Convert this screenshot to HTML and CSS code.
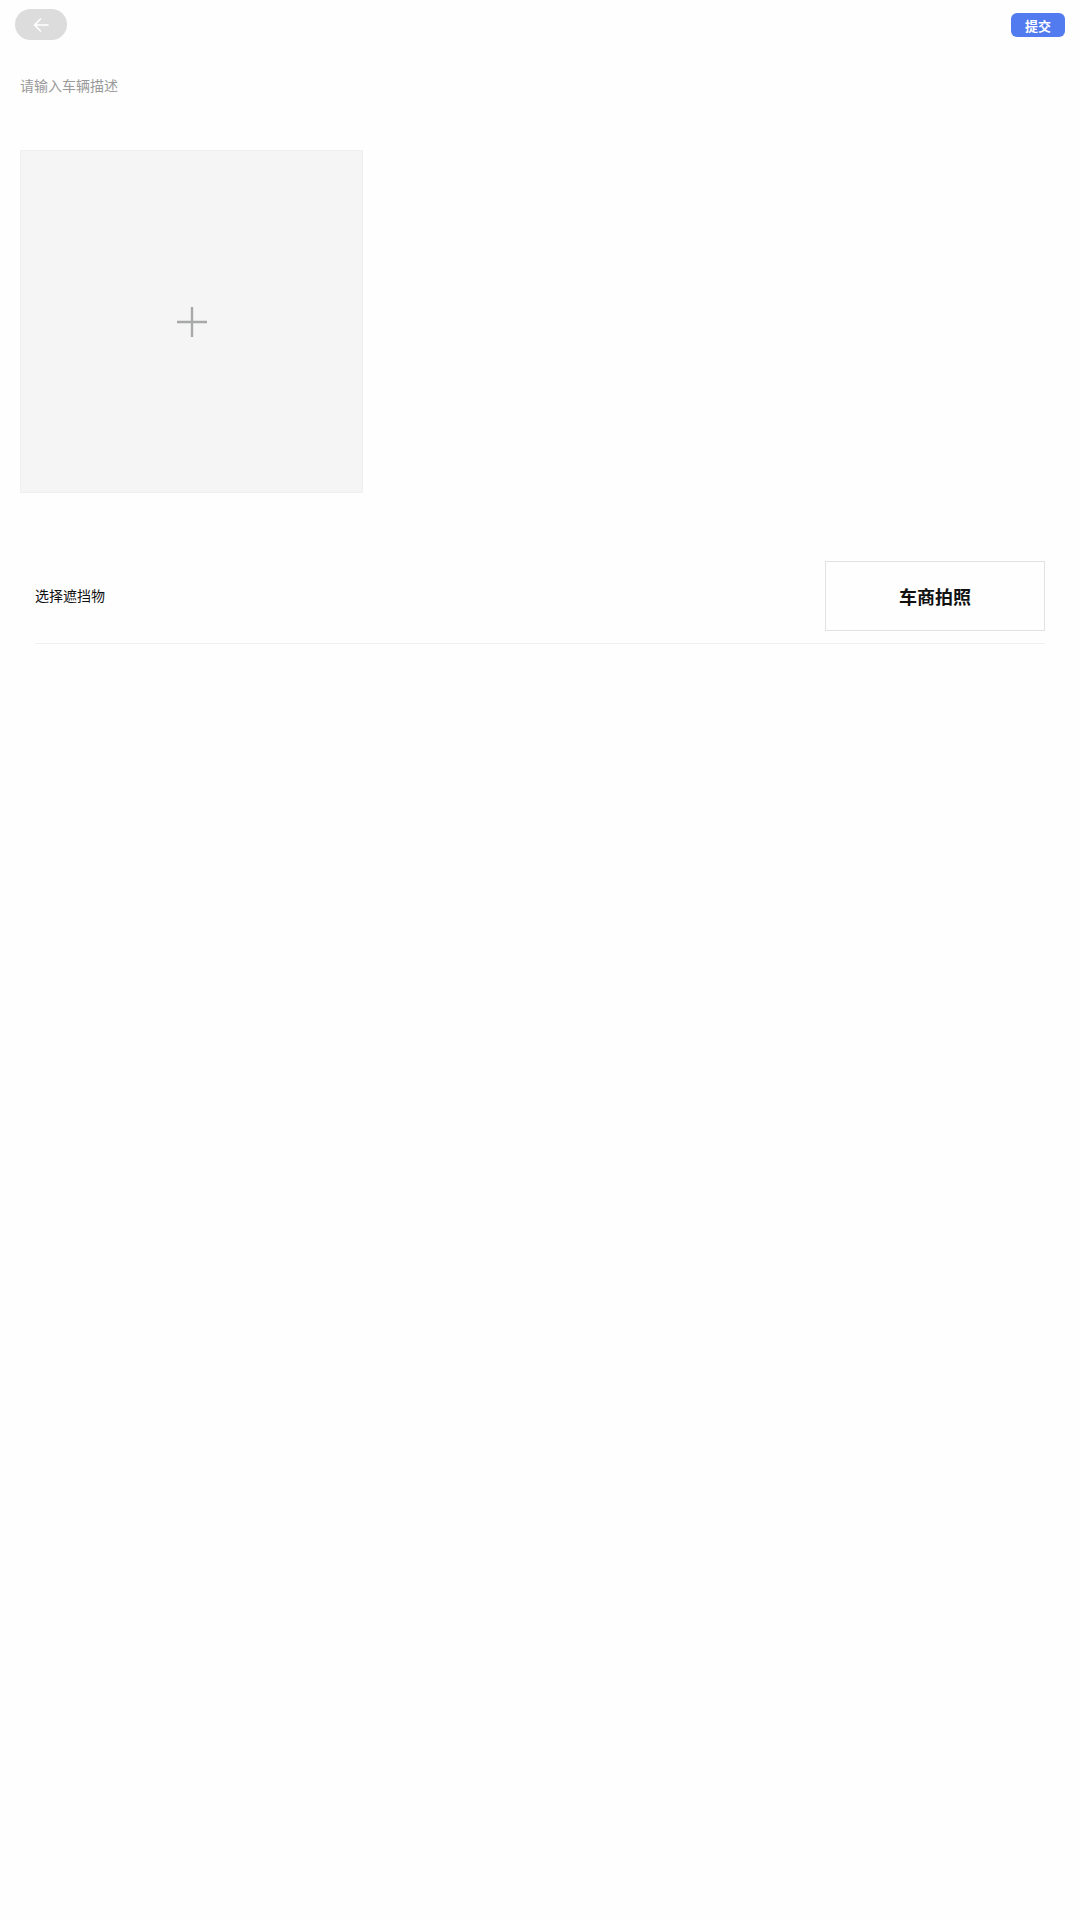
FILE: index.html
```html
<!DOCTYPE html>
<html lang="zh">
<head>
    <meta charset="UTF-8">
    <meta name="viewport" content="width=device-width, initial-scale=1.0">
    <title>车辆描述</title>
    <link rel="stylesheet" href="styles.css">
</head>
<body>
    <div class="header">
        <button class="back">
            <svg width="18" height="18" viewBox="0 0 18 18">
                <path d="M16 9H2.5M8.5 3L2.5 9l6 6" fill="none" stroke="#fff" stroke-width="1.6" stroke-linecap="round" stroke-linejoin="round"/>
            </svg>
        </button>
        <button class="submit">提交</button>
    </div>

    <textarea class="desc" placeholder="请输入车辆描述"></textarea>

    <div class="upload">
        <svg width="32" height="32" viewBox="0 0 32 32">
            <path d="M16 1v30M1 16h30" stroke="#a6a9a8" stroke-width="2.4"/>
        </svg>
    </div>

    <div class="row">
        <span class="label">选择遮挡物</span>
        <div class="pick">车商拍照</div>
    </div>
</body>
</html>
```

FILE: styles.css
```css
body {
    margin: 0;
    background: #fefefe;
    font-family: "Liberation Sans", "Noto Sans CJK SC", sans-serif;
    color: #111;
}

.header {
    display: flex;
    justify-content: space-between;
    align-items: flex-start;
    padding: 9px 15px 0 15px;
}

.back {
    width: 52px;
    height: 31px;
    border: none;
    border-radius: 16px;
    background: #dcdcdc;
    display: flex;
    align-items: center;
    justify-content: center;
    padding: 0;
}

.submit {
    margin-top: 4px;
    width: 54px;
    height: 24px;
    border: none;
    border-radius: 6px;
    background: #527bef;
    color: #fff;
    font-family: "Liberation Sans", "Noto Sans CJK SC", sans-serif;
    font-size: 13px;
    font-weight: bold;
    padding: 0;
}

.desc {
    display: block;
    box-sizing: border-box;
    width: 100%;
    height: 60px;
    margin-top: 36px;
    padding: 0 20px;
    border: none;
    outline: none;
    resize: none;
    background: transparent;
    font-family: "Liberation Sans", "Noto Sans CJK SC", sans-serif;
    font-size: 14px;
    line-height: 20px;
}

.desc::placeholder {
    color: #999;
}

.upload {
    box-sizing: border-box;
    width: 343px;
    height: 343px;
    margin: 14px 0 0 20px;
    background: #f5f5f5;
    border: 1px solid #efefef;
    display: flex;
    align-items: center;
    justify-content: center;
}

.row {
    display: flex;
    justify-content: space-between;
    align-items: center;
    margin: 68px 35px 0 35px;
    padding-bottom: 12px;
    border-bottom: 1px solid #efefef;
}

.label {
    font-size: 14px;
    line-height: 20px;
}

.pick {
    box-sizing: border-box;
    width: 220px;
    height: 70px;
    border: 1px solid #e2e2e2;
    display: flex;
    align-items: center;
    justify-content: center;
    font-size: 18px;
    font-weight: bold;
}
```
